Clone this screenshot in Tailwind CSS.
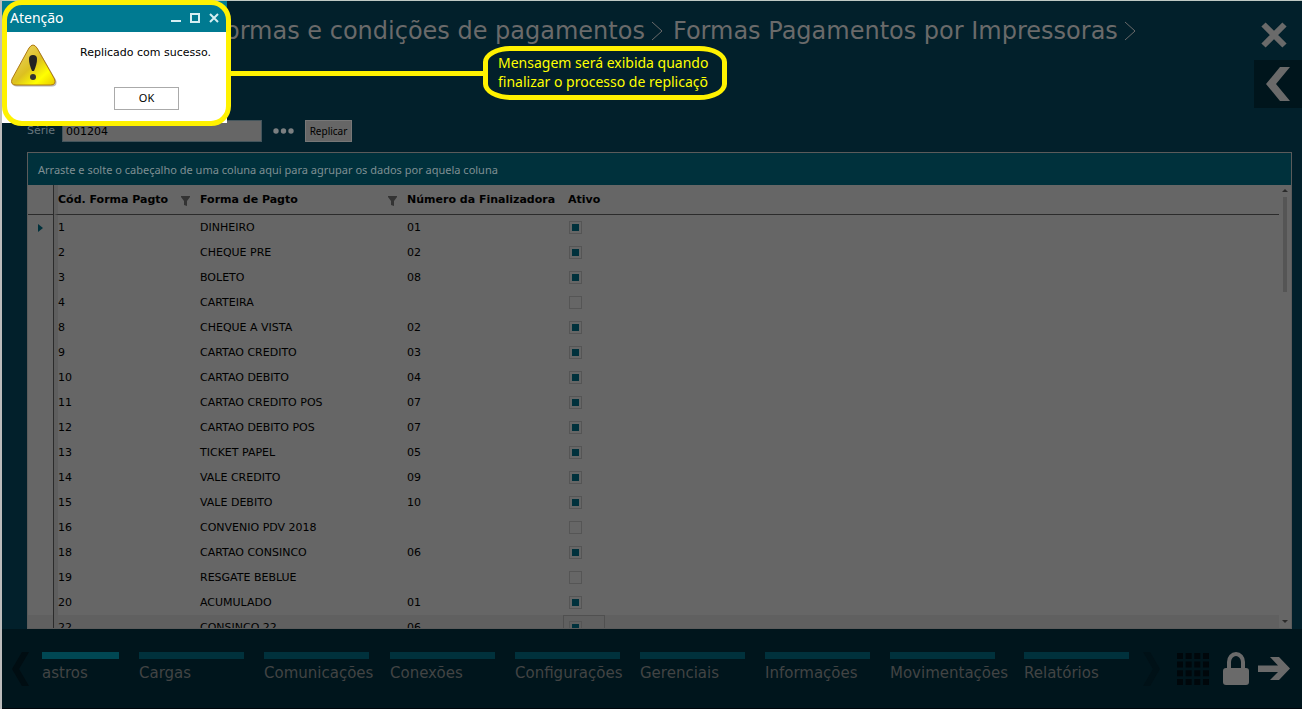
<!DOCTYPE html>
<html lang="pt-BR">
<head>
    <meta charset="UTF-8">
    <meta name="viewport" content="width=device-width, initial-scale=1.0">
    <title>Formas Pagamentos por Impressoras</title>
    <script src="https://cdn.jsdelivr.net/npm/@tailwindcss/browser@4"></script>
</head>
<body class="bg-[#02202b] font-['DejaVu_Sans',sans-serif] text-[11px] text-black">
    <div class="relative h-screen flex flex-col border-t border-t-[#bfc9c4] border-l-2 border-l-[#bcbcbc]">

        <!-- Header -->
        <header class="flex justify-between shrink-0">
            <nav class="flex items-center gap-[6px] h-15 pl-[210px] text-2xl text-[#6a6a6a] whitespace-nowrap">
                <a href="#">Formas e condições de pagamentos</a>
                <svg class="w-3 h-5" viewBox="0 0 12 20" fill="none" stroke="currentColor"><path d="M1 1l10 9-10 9"/></svg>
                <a href="#" class="pl-1">Formas Pagamentos por Impressoras</a>
                <svg class="w-3 h-5" viewBox="0 0 12 20" fill="none" stroke="currentColor"><path d="M1 1l10 9-10 9"/></svg>
            </nav>
            <div class="w-12 shrink-0">
                <button class="w-full h-[59px] pt-2 pr-2 flex items-center justify-center text-[#6a6a6a]" aria-label="Fechar">
                    <svg class="w-[26px] h-[26px]" viewBox="0 0 26 26" fill="none" stroke="currentColor" stroke-width="6"><path d="M2.500 2.500l21 21M23.500 2.500l-21 21"/></svg>
                </button>
                <button class="w-full h-12 flex items-center justify-center bg-[#00151c] text-[#6a6a6a]" aria-label="Voltar">
                    <svg class="w-6 h-[34px]" viewBox="0 0 24 34" fill="currentColor"><path d="M14 0h10L10 17l14 17H14L0 17z"/></svg>
                </button>
            </div>
        </header>

        <!-- Filter -->
        <form class="flex items-center shrink-0 mt-3 pl-[25px] h-[22px]">
            <label for="serie" class="w-[35px] text-[#66757b]">Série</label>
            <input id="serie" type="text" value="001204" class="w-[200px] h-[22px] px-[3px] pt-px bg-[#666] border border-[#44555c] outline-none">
            <button type="button" class="mx-[11px] text-[#7b7f81]" aria-label="Pesquisar">
                <svg class="w-[21px] h-[6px]" viewBox="0 0 21 6" fill="currentColor"><circle cx="3" cy="3" r="2.700"/><circle cx="10.500" cy="3" r="2.700"/><circle cx="18" cy="3" r="2.700"/></svg>
            </button>
            <button type="button" class="w-[47px] h-[22px] bg-[#666] border border-[#777] font-['Noto_Sans',sans-serif] text-[10px]">Replicar</button>
        </form>

        <!-- Grid -->
        <main class="flex flex-col flex-1 min-h-0 mt-[10px] ml-[25px] mr-[10px] border border-[#5b5b5b] bg-[#666]">
            <p class="flex items-center shrink-0 h-8 pt-[2px] pl-[10px] bg-[#00313c] text-[#7f8f93] font-['Noto_Sans',sans-serif] text-[11px]">Arraste e solte o cabeçalho de uma coluna aqui para agrupar os dados por aquela coluna</p>
            <div class="flex flex-1 min-h-0">
                <div class="flex-1 min-w-0 overflow-hidden">
                    <table class="w-full table-fixed border-separate border-spacing-0 text-left">
                        <colgroup>
                            <col class="w-[26px]"><col class="w-[142px]"><col class="w-[207px]"><col class="w-[161px]"><col>
                        </colgroup>
                        <thead>
                            <tr class="h-[30px]">
                                <th class="border-b border-r border-[#2b2b2b]"></th>
                                <th class="pt-[2px] border-b border-b-[#2b2b2b] border-l-4 border-l-[#5e5e5e]">
                                    <div class="flex items-center justify-between pr-[6px] whitespace-nowrap">Cód. Forma Pagto
                                        <svg class="w-[9px] h-[10px]" viewBox="0 0 9 10" fill="#333"><path d="M0 0h9v1L6 5v5L3 9V5L0 1z"/></svg>
                                    </div>
                                </th>
                                <th class="pt-[2px] border-b border-[#2b2b2b] pl-1">
                                    <div class="flex items-center justify-between pr-[6px] whitespace-nowrap">Forma de Pagto
                                        <svg class="w-[9px] h-[10px]" viewBox="0 0 9 10" fill="#333"><path d="M0 0h9v1L6 5v5L3 9V5L0 1z"/></svg>
                                    </div>
                                </th>
                                <th class="pt-[2px] border-b border-[#2b2b2b] pl-1 whitespace-nowrap">Número da Finalizadora</th>
                                <th class="pt-[2px] border-b border-[#2b2b2b] pl-1">Ativo</th>
                            </tr>
                        </thead>
                        <tbody id="rows"></tbody>
                    </table>
                </div>
                <!-- Scrollbar -->
                <div class="w-3 shrink-0 flex flex-col items-center py-1 text-[#2b2b2b]">
                    <svg class="w-[6px] h-[4px] mb-1" viewBox="0 0 6 4" fill="currentColor"><path d="M3 0l3 3H0z"/></svg>
                    <div class="w-1 h-[95px] bg-[#555]"></div>
                    <svg class="w-[6px] h-[4px] mt-auto" viewBox="0 0 6 4" fill="currentColor"><path d="M0 0h6L3 3z"/></svg>
                </div>
            </div>
        </main>

        <!-- Bottom menu -->
        <footer class="flex shrink-0 h-20 bg-[#00151c] border-b border-[#00060c] text-[15px] text-[#424444]">
            <button class="w-10 shrink-0 pl-[10px] text-[#000d12]" aria-label="Anterior">
                <svg class="w-[17px] h-[34px]" viewBox="0 0 17 34" fill="currentColor"><path d="M10 0h7L7 17l10 17h-7L0 17z"/></svg>
            </button>
            <nav class="flex gap-5 pt-[23px] whitespace-nowrap">
                <a href="#" class="w-[77px]"><span class="block h-[7px] mb-[3px] bg-[#004753]"></span>astros</a>
                <a href="#" class="w-[105px]"><span class="block h-[7px] mb-[3px] bg-[#00313c]"></span>Cargas</a>
                <a href="#" class="w-[106px]"><span class="block w-[105px] h-[7px] mb-[3px] bg-[#00313c]"></span>Comunicações</a>
                <a href="#" class="w-[105px]"><span class="block h-[7px] mb-[3px] bg-[#00313c]"></span>Conexões</a>
                <a href="#" class="w-[105px]"><span class="block h-[7px] mb-[3px] bg-[#00313c]"></span>Configurações</a>
                <a href="#" class="w-[105px]"><span class="block h-[7px] mb-[3px] bg-[#00313c]"></span>Gerenciais</a>
                <a href="#" class="w-[105px]"><span class="block h-[7px] mb-[3px] bg-[#00313c]"></span>Informações</a>
                <a href="#" class="w-[114px]"><span class="block w-[105px] h-[7px] mb-[3px] bg-[#00313c]"></span>Movimentações</a>
                <a href="#" class="w-[105px]"><span class="block h-[7px] mb-[3px] bg-[#00313c]"></span>Relatórios</a>
            </nav>
            <div class="flex items-center ml-auto pr-3 text-[#6a6a6a]">
                <button class="mr-[17px] text-[#001117]" aria-label="Próximo">
                    <svg class="w-[17px] h-[34px]" viewBox="0 0 17 34" fill="currentColor"><path d="M0 0h7l10 17L7 34H0l10-17z"/></svg>
                </button>
                <button class="mr-[14px] text-[#00070b]" aria-label="Módulos">
                    <svg class="w-8 h-8" viewBox="0 0 32 32" stroke="currentColor" stroke-width="6" stroke-dasharray="6 2.660"><path d="M0 3h32M0 11.600h32M0 20.200h32M0 29h32"/></svg>
                </button>
                <button class="mr-[9px]" aria-label="Bloquear">
                    <svg class="w-[26px] h-[33px]" viewBox="0 0 26 33"><rect y="16" width="26" height="17" rx="3" fill="currentColor"/><path d="M6 17v-7a7 8 0 0 1 14 0v7" fill="none" stroke="currentColor" stroke-width="4"/></svg>
                </button>
                <button aria-label="Sair">
                    <svg class="w-8 h-[23px]" viewBox="0 0 32 23" fill="currentColor"><path d="M0 8.500h20L12 0h9l11 11.500L21 23h-9l8-8H0z"/></svg>
                </button>
            </div>
        </footer>

        <!-- Message dialog -->
        <div role="dialog" aria-labelledby="dialogTitle" class="absolute left-0 top-0 w-[225px] h-[122px] bg-white">
            <div class="flex items-center h-[31px] pl-2 pr-2 bg-[#007a91] text-[#d5eef2]">
                <h2 id="dialogTitle" class="flex-1 pt-[3px] font-['Noto_Sans',sans-serif] text-sm text-white">Atenção</h2>
                <div class="flex items-center gap-[9px] pt-[3px]">
                    <button aria-label="Minimizar"><svg class="w-[10px] h-[10px]" viewBox="0 0 10 10" fill="currentColor"><path d="M0 7h10v2H0z"/></svg></button>
                    <button aria-label="Maximizar"><svg class="w-[10px] h-[10px]" viewBox="0 0 10 10" fill="none" stroke="currentColor" stroke-width="2"><path d="M1 1h8v8H1z"/></svg></button>
                    <button aria-label="Fechar mensagem"><svg class="w-[10px] h-[10px]" viewBox="0 0 10 10" fill="none" stroke="currentColor" stroke-width="2"><path d="M1 1l8 8M9 1L1 9"/></svg></button>
                </div>
            </div>
            <div class="flex pl-2 pt-3">
                <svg class="w-[48px] h-[44px]" viewBox="0 0 48 44">
                    <defs>
                        <linearGradient id="sign" x1="0" y1="0" x2="1" y2="1">
                            <stop offset="0" stop-color="#f0d878"/><stop offset=".5" stop-color="#dcc020"/><stop offset=".75" stop-color="#ffff00"/><stop offset="1" stop-color="#e8c800"/>
                        </linearGradient>
                    </defs>
                    <path d="M20 5q4-6 8 0l18 31q2 6-4 6.500H7q-6-.5-4-6.500z" fill="#999" opacity=".7"/>
                    <path d="M19 4q4-6 8 0l17.500 31q2 6-4 6H6q-6 0-4-6z" fill="url(#sign)" stroke="#b07a10"/>
                    <path d="M19 15q0-4 4-4t4 4q0 5-3 12h-2q-3-7-3-12z" fill="#222"/>
                    <circle cx="23" cy="33" r="3" fill="#333"/>
                </svg>
                <div class="flex flex-col pl-[22px]">
                    <p class="pt-px whitespace-nowrap">Replicado com sucesso.</p>
                    <button class="w-[65px] h-[23px] mt-[25px] ml-[34px] border border-[#aaa] bg-white font-['Noto_Sans',sans-serif]">OK</button>
                </div>
            </div>
        </div>

        <!-- Yellow callout -->
        <div class="absolute left-0 -top-px w-[229px] h-[126px] border-5 border-[#fff200] rounded-[20px]"></div>
        <div class="absolute left-[228px] top-[70px] w-[256px] h-[5px] bg-[#fff200]"></div>
        <p class="absolute left-[481px] top-[45px] w-[244px] h-[54px] pl-[10px] pt-[2px] border-5 border-[#fff200] rounded-[28px/16px] font-['Noto_Sans',sans-serif] text-sm leading-[19px] text-[#ffff00] whitespace-nowrap">Mensagem será exibida quando<br>finalizar o processo de replicaçõ</p>
    </div>

    <script>
        const payments = [
            ["1", "DINHEIRO", "01", true],
            ["2", "CHEQUE PRE", "02", true],
            ["3", "BOLETO", "08", true],
            ["4", "CARTEIRA", "", false],
            ["8", "CHEQUE A VISTA", "02", true],
            ["9", "CARTAO CREDITO", "03", true],
            ["10", "CARTAO DEBITO", "04", true],
            ["11", "CARTAO CREDITO POS", "07", true],
            ["12", "CARTAO DEBITO POS", "07", true],
            ["13", "TICKET PAPEL", "05", true],
            ["14", "VALE CREDITO", "09", true],
            ["15", "VALE DEBITO", "10", true],
            ["16", "CONVENIO PDV 2018", "", false],
            ["18", "CARTAO CONSINCO", "06", true],
            ["19", "RESGATE BEBLUE", "", false],
            ["20", "ACUMULADO", "01", true],
            ["22", "CONSINCO 22", "06", true]
        ];
        const arrow = `<svg class="w-[5px] h-2 ml-[10px]" viewBox="0 0 5 8" fill="#00313c"><path d="M0 0l5 4-5 4z"/></svg>`;

        document.getElementById("rows").innerHTML = payments.map(([code, name, number, active], i) => {
            const current = i === payments.length - 1;
            return `
            <tr class="h-[25px] ${current ? "bg-[#606060]" : ""}">
                <td class="border-r border-[#2b2b2b]">${i === 0 ? arrow : ""}</td>
                <td class="pt-[2px] border-l-4 border-[#5e5e5e]">${code}</td>
                <td class="pt-[2px] pl-1">${name}</td>
                <td class="pt-[2px] pl-1">${number}</td>
                <td class="p-0">
                    <div class="flex items-center w-[42px] h-[25px] -ml-px border ${current ? "border-[#505050]" : "border-transparent"}">
                        <input type="checkbox" aria-label="Ativo ${name}" ${active ? "checked" : ""}
                            class="appearance-none w-[13px] h-[13px] ml-[5px] p-[2px] border border-[#555] bg-clip-content checked:bg-[#00313c]">
                    </div>
                </td>
            </tr>`;
        }).join("");
    </script>
</body>
</html>
